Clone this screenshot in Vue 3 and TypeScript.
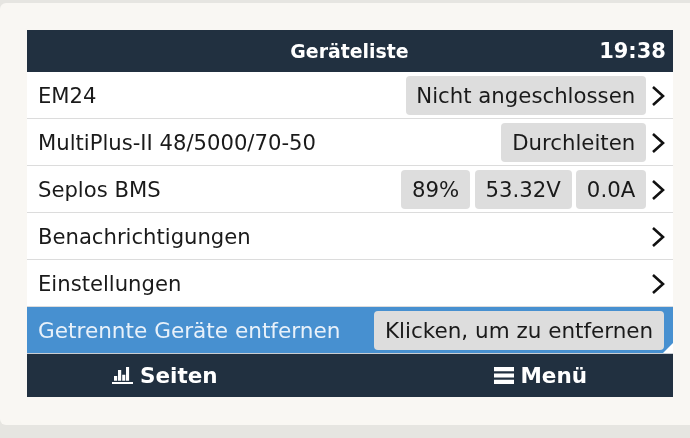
<script setup lang="ts">
interface Row { label: string; values: string[]; arrow: boolean; active?: boolean }
const rows: Row[] = [
  { label: 'EM24', values: ['Nicht angeschlossen'], arrow: true },
  { label: 'MultiPlus-II 48/5000/70-50', values: ['Durchleiten'], arrow: true },
  { label: 'Seplos BMS', values: ['89%', '53.32V', '0.0A'], arrow: true },
  { label: 'Benachrichtigungen', values: [], arrow: true },
  { label: 'Einstellungen', values: [], arrow: true },
  { label: 'Getrennte Geräte entfernen', values: ['Klicken, um zu entfernen'], arrow: false, active: true },
]
</script>

<template>
  <div class="page">
    <div class="card">
      <div class="screen">
        <header class="top">
          <span class="title">Geräteliste</span>
          <span class="time">19:38</span>
        </header>
        <div class="list">
          <div v-for="r in rows" :key="r.label" class="row" :class="{ active: r.active }">
            <span class="label">{{ r.label }}</span>
            <div class="values">
              <span v-for="v in r.values" :key="v" class="pill">{{ v }}</span>
            </div>
            <svg v-if="r.arrow" class="arrow" width="14" height="22" viewBox="0 0 14 22">
              <path d="M2 2 L12 11 L2 20" fill="none" stroke="#111" stroke-width="2.6" />
            </svg>
            <span v-if="r.active" class="corner"></span>
          </div>
        </div>
        <footer class="bottom">
          <div class="tab">
            <svg width="21" height="18" viewBox="0 0 21 18">
              <path d="M0 16H21" stroke="#fff" stroke-width="2" />
              <path d="M2 9h3.2v4.8H2zM6 3h3.2v10.8H6zM10.2 7.7h3.1v6.1h-3.1zM14 0h3.1v13.8H14z" fill="#fff" />
            </svg>
            <span>Seiten</span>
          </div>
          <div class="tab">
            <svg width="20" height="17" viewBox="0 0 20 17">
              <path d="M0 0h20v4.3H0zM0 6.4h20v4.2H0zM0 12.7h20V17H0z" fill="#fff" />
            </svg>
            <span>Menü</span>
          </div>
        </footer>
      </div>
    </div>
  </div>
</template>

<style scoped>
.page {
  width: 690px;
  height: 438px;
  background: #e6e5e1;
  padding-top: 3px;
  box-sizing: border-box;
  overflow: hidden;
  font-family: "DejaVu Sans", sans-serif;
}
.card {
  width: 690px;
  height: 422px;
  background: #f9f7f3;
  border-radius: 6px 0 0 6px;
  padding: 27px 0 0 27px;
  box-sizing: border-box;
}
.screen {
  width: 646px;
  height: 367px;
  background: #fff;
  display: flex;
  flex-direction: column;
  filter: blur(0.35px);
}
.top {
  height: 42px;
  flex: none;
  background: #213040;
  color: #fff;
  font-weight: 700;
  display: flex;
  align-items: center;
  justify-content: center;
  position: relative;
  box-sizing: border-box;
}
.title { font-size: 18.9px; margin-left: -1px; }
.time {
  position: absolute;
  right: 7px;
  font-size: 21px;
}
.list { flex: 1; }
.row {
  height: 47px;
  box-sizing: border-box;
  border-bottom: 1.5px solid #dcdcdc;
  padding: 1px 8px 0 11px;
  display: flex;
  align-items: center;
  font-size: 21.15px;
  color: #1a1a1a;
  position: relative;
}
.row.active {
  background: #4790d0;
  color: #e8f1fa;
  font-size: 21.6px;
  padding-right: 9px;
  border-bottom-color: #c9cdd2;
}
.row.active .pill { font-size: 21.5px; }
.label { flex: none; }
.values {
  margin-left: auto;
  display: flex;
  gap: 4.5px;
}
.pill {
  background: #dddddd;
  color: #1a1a1a;
  font-size: 21.25px;
  height: 39px;
  display: flex;
  align-items: center;
  padding: 0 10.8px;
  border-radius: 4px;
}
.arrow { margin-left: 5px; flex: none; }
.corner {
  position: absolute;
  right: 0;
  bottom: 0;
  width: 0;
  height: 0;
  border-style: solid;
  border-width: 0 0 10px 10px;
  border-color: transparent transparent #fff transparent;
}
.bottom {
  height: 43px;
  flex: none;
  background: #213040;
  color: #fff;
  font-weight: 700;
  font-size: 21.5px;
  display: flex;
  justify-content: space-between;
  padding: 0 86px 0 85px;
}
.tab {
  display: flex;
  align-items: center;
  gap: 7px;
}
.tab + .tab { gap: 6px; }
</style>
